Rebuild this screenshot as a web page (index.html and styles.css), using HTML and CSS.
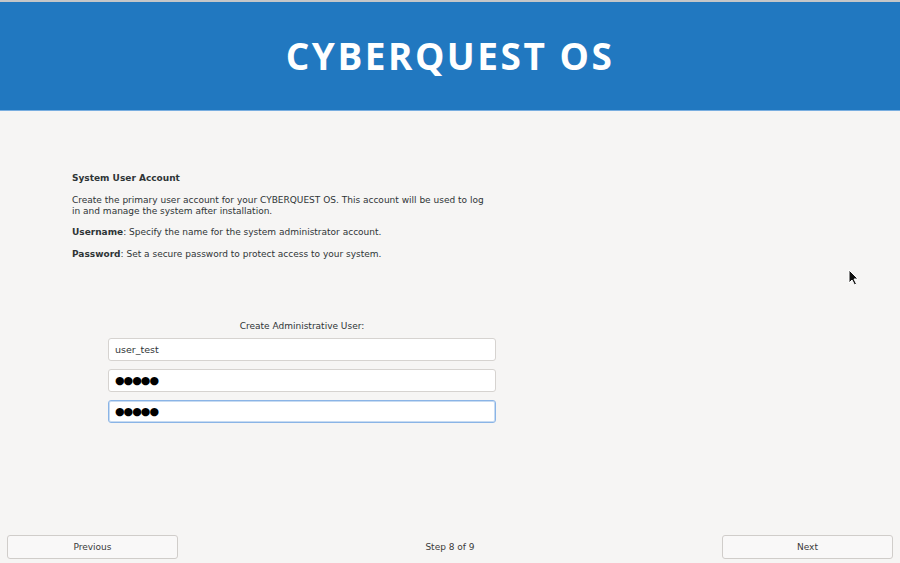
FILE: index.html
```html
<!DOCTYPE html>
<html>
<head>
<meta charset="utf-8">
<title>CYBERQUEST OS</title>
<link rel="stylesheet" href="styles.css">
</head>
<body>
<div class="window">
  <div class="banner">
    <h1>CYBERQUEST OS</h1>
  </div>

  <div class="page">
    <div class="info">
      <p class="title">System User Account</p>
      <p>Create the primary user account for your CYBERQUEST OS. This account will be used to log<br>in and manage the system after installation.</p>
      <p><b>Username</b>: Specify the name for the system administrator account.</p>
      <p><b>Password</b>: Set a secure password to protect access to your system.</p>
    </div>

    <div class="form">
      <div class="form-label">Create Administrative User:</div>
      <div class="entry">user_test</div>
      <div class="entry dots">&#9679;&#9679;&#9679;&#9679;&#9679;</div>
      <div class="entry dots focus">&#9679;&#9679;&#9679;&#9679;&#9679;</div>
    </div>
  </div>

  <div class="footer">
    <div class="btn">Previous</div>
    <div class="step">Step 8 of 9</div>
    <div class="btn">Next</div>
  </div>

  <svg class="cursor" width="12" height="18" viewBox="0 0 12 18">
    <path d="M1 1 L1 14 L4 11 L6.5 16 L8.5 15 L6 10 L10 10 Z" fill="#111" stroke="#fff" stroke-width="1"/>
  </svg>
</div>
</body>
</html>
```

FILE: styles.css
```css
/* installer page, gtk-ish look */
html, body {margin: 0; padding: 0;}
body {background-color: #f6f5f4; color: #2e3436; font-family: "DejaVu Sans", sans-serif; font-size: 9px;}

.window {position: relative; height: 563px; display: flex; flex-direction: column;}

.banner {
  border-top: 2px solid #c4c6c8;
  border-bottom: 1px solid #79aee0;
  background-color: #2178c0;
  height: 108px;
  display: flex;
  align-items: center;
  justify-content: center;
}
.banner h1 {
  margin: 0 0 2px 0;
  color: #ffffff;
  font-family: "Open Sans", sans-serif;
  font-weight: 700;
  font-size: 37px;
  letter-spacing: 2.5px;
}

.page {flex: 1; padding: 62px 0 0 72px;}
.info p {margin: 0 0 10px 0; line-height: 11px;}
.info .title {font-weight: bold; margin-bottom: 11px;}
.info p:last-child {margin-top: 11px;}

.form {width: 388px; margin: 61px 0 0 36px; display: flex; flex-direction: column; gap: 8px;}
.form-label {text-align: center; margin-bottom: -1px;}
.entry {
  height: 21px;
  line-height: 21px;
  padding: 0 6px;
  background-color: #ffffff;
  border: 1px solid #d6d3d0;
  border-radius: 3px;
  font-size: 9.5px;
}
.entry.dots {font-size: 11px; letter-spacing: -1px; color: #000;}
.entry.focus {border-color: #8ab4e6; box-shadow: 0 0 0 1px #c7dbf2 inset;}

.footer {display: flex; align-items: center; justify-content: space-between; padding: 0 7px 4px 7px;}
.btn {
  width: 169px;
  height: 22px;
  line-height: 22px;
  text-align: center;
  background-color: #f9f8f8;
  border: 1px solid #d0cdca;
  border-radius: 3px;
  color: #3a3a3a;
}
.step {color: #3a3a3a;}

.cursor {position: absolute; left: 848px; top: 269px;}
```
